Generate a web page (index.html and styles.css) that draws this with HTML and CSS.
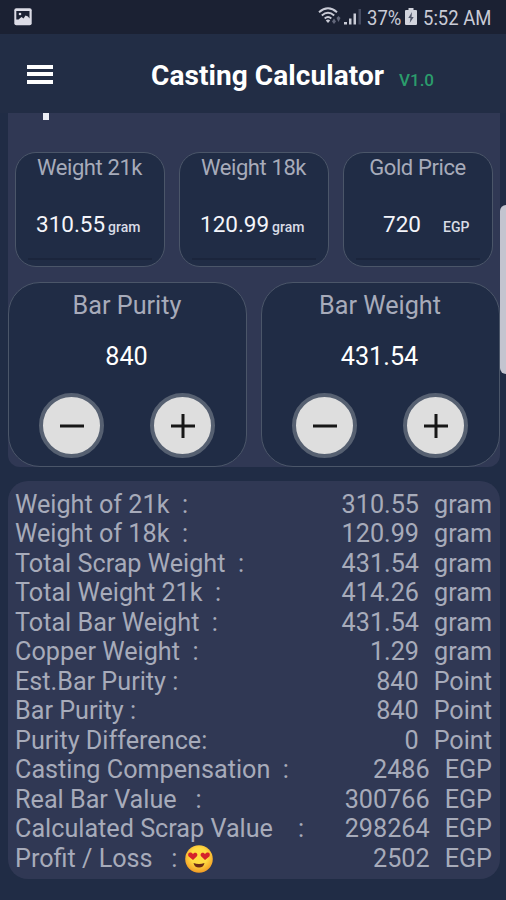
FILE: index.html
```html
<!DOCTYPE html>
<html lang="en">
<head>
<meta charset="utf-8">
<title>Casting Calculator</title>
<link rel="stylesheet" href="styles.css">
</head>
<body>
<div class="status">
  <svg class="shot" width="18" height="18" viewBox="0 0 18 18"><rect x=".3" y=".3" width="17.4" height="17" rx="2" fill="#dcdce6"/><path d="M2.300 3h13.200v7.500l-1.500-2-2.500-1-2 3-2-1.500-3 2.500-2.200 0z" fill="#1b2133"/><circle cx="6" cy="6" r="1.300" fill="#dcdce6"/></svg>
  <div class="status-right">
    <svg class="wifi" width="24" height="18" viewBox="0 0 24 18"><g fill="none" stroke="#c9cbd6" stroke-width="1.900"><path d="M1 5.200Q10-2.500 19 5.200"/><path d="M3.800 8.500Q10 3 16.200 8.500"/><path d="M6.700 11.500Q10 8.500 13.300 11.500"/></g><path d="M7.800 13.500Q10 11.500 12.200 13.500L10 16z" fill="#c9cbd6"/><path d="M14 14.500l2-3 2 3-2 2.500zM18.500 11l2-2 2 2-2 4z" fill="#62677a"/></svg>
    <svg class="signal" width="17" height="17" viewBox="0 0 17 17"><path d="M0 16.500v-2.500h3v2.500zM5 16.500v-6h2.500v6zM9.500 16.500V5.500H12V16.500z" fill="#c9cbd6"/><path d="M14.500 1H17v15.500h-2.500z" fill="#454b60"/></svg>
    <span class="stext pct">37%</span>
    <svg class="battery" width="12" height="18" viewBox="0 0 12 18"><path d="M3.500 0h5v2H11q1 0 1 1v13q0 1-1 1H1q-1 0-1-1V3q0-1 1-1h2.500z" fill="#d2d4dd"/><path d="M7 4L3.300 10h2.200L4.700 15l4-6H6.500z" fill="#50566a"/></svg>
    <span class="stext time">5:52 AM</span>
  </div>
</div>
<header class="bar">
  <div class="menu"><i></i><i></i><i></i></div>
  <h1>Casting Calculator</h1>
  <span class="version">V1.0</span>
</header>
<main>
  <section class="inputs">
    <div class="clip"><i></i></div>
    <div class="small-row">
      <div class="small"><div class="label">Weight 21k</div><div class="val"><b>310.55</b><small>gram</small></div><hr></div>
      <div class="small"><div class="label">Weight 18k</div><div class="val"><b>120.99</b><small>gram</small></div><hr></div>
      <div class="small price"><div class="label">Gold Price</div><div class="val"><b>720</b><small>EGP</small></div><hr></div>
    </div>
    <div class="large-row">
      <div class="large"><div class="label">Bar Purity</div><div class="num">840</div>
        <div class="buttons"><button><svg width="26" height="26" viewBox="0 0 26 26"><path d="M1 13h24"/></svg></button><button><svg width="26" height="26" viewBox="0 0 26 26"><path d="M1 13h24M13 1v24"/></svg></button></div></div>
      <div class="large"><div class="label">Bar Weight</div><div class="num">431.54</div>
        <div class="buttons"><button><svg width="26" height="26" viewBox="0 0 26 26"><path d="M1 13h24"/></svg></button><button><svg width="26" height="26" viewBox="0 0 26 26"><path d="M1 13h24M13 1v24"/></svg></button></div></div>
    </div>
  </section>
  <section class="results">
    <div class="row"><span>Weight of 21k  :</span><span class="amount">310.55  <em>gram</em></span></div>
    <div class="row"><span>Weight of 18k  :</span><span class="amount">120.99  <em>gram</em></span></div>
    <div class="row"><span>Total Scrap Weight  :</span><span class="amount">431.54  <em>gram</em></span></div>
    <div class="row"><span>Total Weight 21k  :</span><span class="amount">414.26  <em>gram</em></span></div>
    <div class="row"><span>Total Bar Weight  :</span><span class="amount">431.54  <em>gram</em></span></div>
    <div class="row"><span>Copper Weight  :</span><span class="amount">1.29  <em>gram</em></span></div>
    <div class="row"><span>Est.Bar Purity :</span><span class="amount">840  <em>Point</em></span></div>
    <div class="row"><span>Bar Purity :</span><span class="amount">840  <em>Point</em></span></div>
    <div class="row"><span>Purity Difference:</span><span class="amount">0  <em>Point</em></span></div>
    <div class="row"><span>Casting Compensation  :</span><span class="amount">2486  <em>EGP</em></span></div>
    <div class="row"><span>Real Bar Value   :</span><span class="amount">300766  <em>EGP</em></span></div>
    <div class="row"><span>Calculated Scrap Value    :</span><span class="amount">298264  <em>EGP</em></span></div>
    <div class="row"><span>Profit / Loss   : <svg class="emoji" width="28" height="28" viewBox="0 0 28 28"><defs><radialGradient id="face" cx=".5" cy=".4" r=".6"><stop offset=".5" stop-color="#ffdc42"/><stop offset="1" stop-color="#f29a25"/></radialGradient></defs><circle cx="14" cy="14" r="13.800" fill="url(#face)"/><path d="M8 15L3.700 11.500C1.500 7.500 6.500 6 8 9C10 6 14 8.500 11.700 11.500z" fill="#d5232b"/><path d="M20 15l4.300-3.500C26.500 7.500 21.500 6 20 9C18 6 14 8.500 16.300 11.500z" fill="#d5232b"/><path d="M8.500 18Q14 20 19.500 18Q18.500 22.500 14 22.500T8.500 18z" fill="#6b2b16"/></svg></span><span class="amount">2502  <em>EGP</em></span></div>
  </section>
</main>
<div class="scroll-thumb"></div>
</body>
</html>
```
FILE: styles.css
```css
* { box-sizing: border-box; }
body {
  margin: 0;
  width: 506px;
  height: 900px;
  overflow: hidden;
  position: relative;
  background: #202c45;
  font-family: Roboto, "Liberation Sans", sans-serif;
  color: #a7abba;
}
svg { display: block; flex: none; }
.status {
  height: 34px;
  background: #1b2133;
  display: flex;
  justify-content: space-between;
  padding: 0 15px 0 14px;
}
.shot { margin-top: 8px; }
.status-right { display: flex; align-items: flex-start; }
.wifi { margin-top: 7px; }
.signal { margin: 8px 6px 0 2px; }
.battery { margin: 8px 6px 0 5px; }
.stext {
  font-size: 21px;
  line-height: 36px;
  color: #c9cbd6;
  white-space: nowrap;
  transform-origin: left;
  transform: scaleX(.88);
}
.pct { width: 33px; }
.time { width: 68px; }
.bar {
  height: 79px;
  display: flex;
  align-items: center;
  background: #222d45;
}
.menu {
  margin: 1px 0 0 27px;
  width: 26px;
  display: flex;
  flex-direction: column;
  gap: 3.500px;
}
.menu i { height: 4px; background: #fff; }
h1 {
  margin: 4px 0 0 98px;
  width: 234px;
  font-size: 28px;
  line-height: 32px;
  letter-spacing: .08px;
  color: #fff;
  white-space: nowrap;
}
.version {
  margin: 12px 0 0 14px;
  font-size: 17px;
  font-weight: 500;
  color: #2b9c6c;
}
.inputs {
  margin: 0 6px 0 8px;
  width: 492px;
  height: 354px;
  border-radius: 0 0 12px 12px;
  background: #303854;
}
.clip { height: 39px; padding-left: 35px; }
.clip i { display: block; width: 6px; height: 7px; background: #eceef5; }
.small-row { display: flex; justify-content: space-between; padding: 0 7px; }
.small {
  width: 150px;
  height: 115px;
  border: 1.500px solid #4b5669;
  border-radius: 21px;
  background: #202c45;
}
.small .label { font-size: 22px; letter-spacing: -.4px; line-height: 30px; padding-right: 1px; text-align: center; }
.small .val {
  display: flex;
  align-items: baseline;
  padding-left: 20px;
  margin-top: 27px;
  color: #f4f5fa;
  line-height: 28px;
}
.small b { font-size: 22.500px; font-weight: 400; width: 72px; }
.small small { font-size: 14px; font-weight: 500; color: #d9dce6; }
.price .val { padding-left: 39px; }
.price b { width: 60px; }
.small hr { margin: 17px 12px 0; border: 0; height: 2px; background: #1b253c; }
.large-row { display: flex; justify-content: space-between; margin-top: 15px; }
.large {
  width: 239px;
  height: 185px;
  border: 1.500px solid #4b5669;
  border-radius: 32px;
  background: #202c45;
  text-align: center;
}
.large .label { font-size: 25.200px; line-height: 30px; margin-top: 8px; padding-right: 1px; }
.num { font-size: 25.200px; line-height: 30px; margin-top: 21px; padding-right: 2px; color: #fff; }
.buttons { display: flex; justify-content: space-between; padding: 0 31px 0 30px; margin-top: 21px; }
button {
  width: 65px;
  height: 65px;
  padding: 0;
  border: 4px solid #566071;
  border-radius: 50%;
  background: #dedede;
  display: flex;
  align-items: center;
  justify-content: center;
}
button path { stroke: #171717; stroke-width: 3; }
.results {
  margin: 14px 6px 0 8px;
  width: 492px;
  height: 398px;
  padding: 8.500px 8px 0 7px;
  border-radius: 20px;
  background: #303854;
  font-size: 25.200px;
}
.row {
  display: flex;
  justify-content: space-between;
  height: 29.540px;
  line-height: 29.540px;
  white-space: pre;
}
.amount em { font-style: normal; margin-left: 2.500px; }
.emoji { display: inline-block; vertical-align: -6px; margin-left: 1px; }
.scroll-thumb {
  position: absolute;
  left: 500px;
  top: 205px;
  width: 12px;
  height: 169px;
  border-radius: 6px;
  background: #c3c4cf;
}
```
